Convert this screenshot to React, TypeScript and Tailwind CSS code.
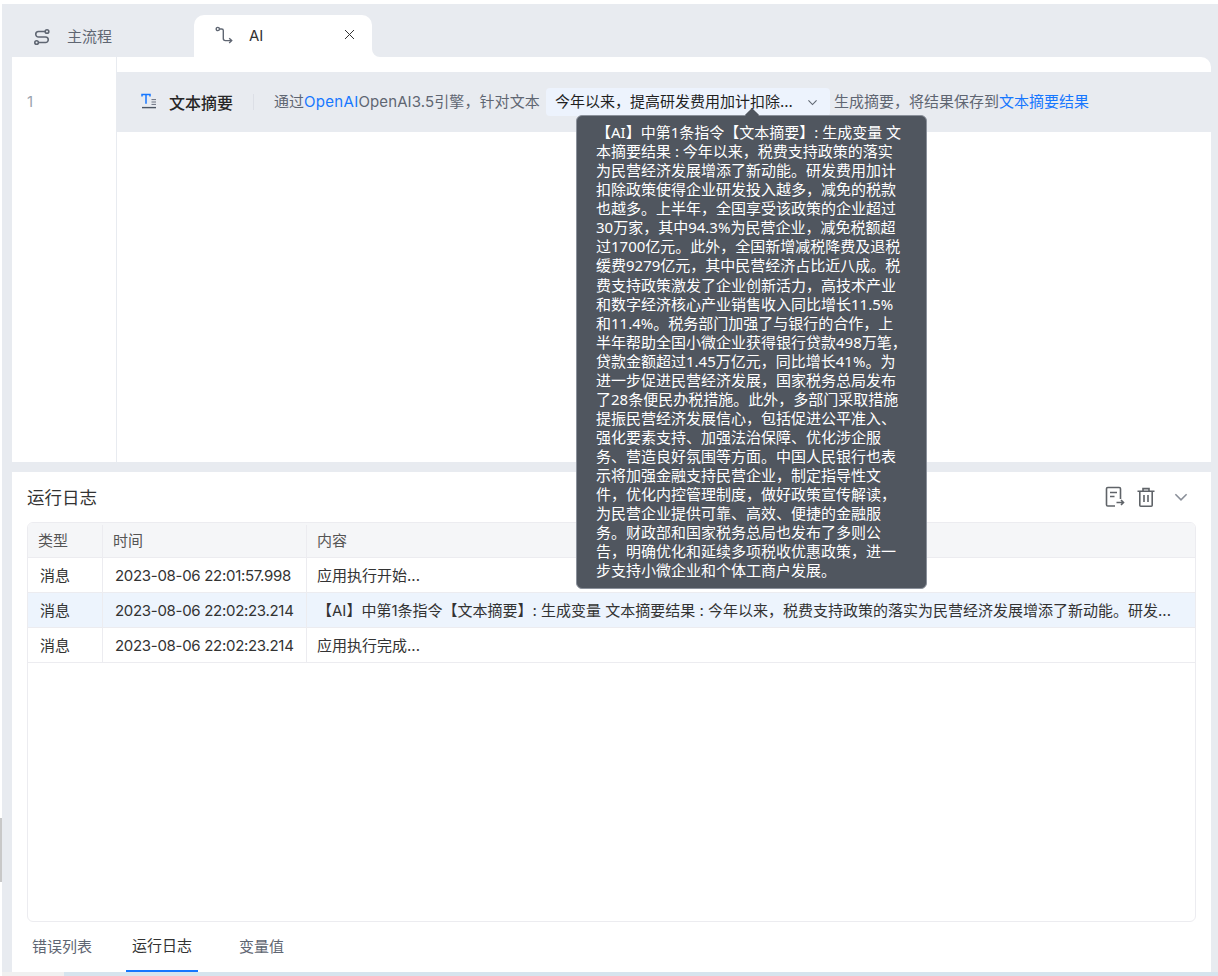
const font = { fontFamily: 'Inter, "Noto Sans CJK SC", sans-serif' }
const tipFont = { fontFamily: '"Noto Sans", "Noto Sans CJK SC", sans-serif' }

const tipText = '【AI】中第1条指令【文本摘要】: 生成变量 文本摘要结果 : 今年以来，税费支持政策的落实为民营经济发展增添了新动能。研发费用加计扣除政策使得企业研发投入越多，减免的税款也越多。上半年，全国享受该政策的企业超过30万家，其中94.3%为民营企业，减免税额超过1700亿元。此外，全国新增减税降费及退税缓费9279亿元，其中民营经济占比近八成。税费支持政策激发了企业创新活力，高技术产业和数字经济核心产业销售收入同比增长11.5%和11.4%。税务部门加强了与银行的合作，上半年帮助全国小微企业获得银行贷款498万笔，贷款金额超过1.45万亿元，同比增长41%。为进一步促进民营经济发展，国家税务总局发布了28条便民办税措施。此外，多部门采取措施提振民营经济发展信心，包括促进公平准入、强化要素支持、加强法治保障、优化涉企服务、营造良好氛围等方面。中国人民银行也表示将加强金融支持民营企业，制定指导性文件，优化内控管理制度，做好政策宣传解读，为民营企业提供可靠、高效、便捷的金融服务。财政部和国家税务总局也发布了多则公告，明确优化和延续多项税收优惠政策，进一步支持小微企业和个体工商户发展。'

const rows = [
  { time: '2023-08-06 22:01:57.998', text: '应用执行开始...', active: false },
  { time: '2023-08-06 22:02:23.214', text: '【AI】中第1条指令【文本摘要】: 生成变量 文本摘要结果 : 今年以来，税费支持政策的落实为民营经济发展增添了新动能。研发...', active: true },
  { time: '2023-08-06 22:02:23.214', text: '应用执行完成...', active: false },
]

const FlowIcon = () => (
  <svg width="18" height="18" viewBox="0 0 18 18" fill="none" stroke="#5f6672" strokeWidth="1.6">
    <circle cx="14" cy="3.5" r="1.8" />
    <circle cx="3.6" cy="14.5" r="1.8" />
    <path d="M12 3.5H5.5a2.75 2.75 0 0 0 0 5.5h7a2.75 2.75 0 0 1 0 5.5H5.6" />
  </svg>
)

const RouteIcon = () => (
  <svg width="18" height="18" viewBox="0 0 18 18" fill="none" stroke="#5f6672" strokeWidth="1.4">
    <circle cx="2.8" cy="3" r="1.6" />
    <path d="M4.5 3h2.2a1.6 1.6 0 0 1 1.6 1.6v8a2 2 0 0 0 2 2h6" />
    <path d="M14.2 12.2l2.5 2.4-2.5 2.4" />
  </svg>
)

const SummaryIcon = () => (
  <svg width="16" height="18" viewBox="0 0 16 18" fill="none">
    <path d="M1 3.6V1.6h8v2M5 1.6v9.2" stroke="#1677ff" strokeWidth="1.5" />
    <path d="M1 14.6h14" stroke="#4b5563" strokeWidth="1.4" />
    <path d="M10.5 6.6H15M10.5 9H15M10.5 11.4H15" stroke="#6b7280" strokeWidth="1" />
  </svg>
)

const ExportIcon = () => (
  <svg width="20" height="22" viewBox="0 0 20 22" fill="none" stroke="#5f6368" strokeWidth="1.6">
    <path d="M10 20H2.8a1.3 1.3 0 0 1-1.3-1.3V2.8a1.3 1.3 0 0 1 1.3-1.3h11.4a1.3 1.3 0 0 1 1.3 1.3V13" />
    <path d="M5 6.5h7M5 10.5h4.5" />
    <path d="M11.5 16.5h7M16 14l2.5 2.5L16 19" />
  </svg>
)

const TrashIcon = () => (
  <svg width="18" height="20" viewBox="0 0 18 20" fill="none" stroke="#5f6368" strokeWidth="1.6">
    <path d="M0.5 4.2h17M6 4V1.6h6V4" />
    <path d="M2.8 4.2v14a1 1 0 0 0 1 1h10.4a1 1 0 0 0 1-1v-14" />
    <path d="M7 8v7M11 8v7" />
  </svg>
)

const Chevron = ({ size, color }: { size: number; color: string }) => (
  <svg width={size} height={size} viewBox="0 0 16 16" fill="none" stroke={color} strokeWidth="1.4">
    <path d="M3 5.5l5 5 5-5" />
  </svg>
)

const App = () => {
  return (
    <div style={font} className="relative h-[976px] w-[1218px] overflow-hidden bg-white pl-[2px] pt-[4px]">
      <div className="flex h-[968px] flex-col bg-[#e8ebf0]">
        {/* tabs */}
        <div className="flex h-[53px] shrink-0 items-end pl-[10px]">
          <div className="flex h-[42px] w-[182px] items-center gap-[16px] pl-[21px] pt-[2px] text-[15px] text-[#5f6672]">
            <FlowIcon />
            <span>主流程</span>
          </div>
          <div className="relative flex h-[42px] w-[178px] items-center rounded-t-[10px] bg-white pl-[21px] pr-[17px] text-[15px] text-[#333]">
            <span className="-mt-[2px]"><RouteIcon /></span>
            <span className="ml-[16px] flex-1">AI</span>
            <span className="-mt-[3px]">
              <svg width="11" height="11" viewBox="0 0 11 11" fill="none" stroke="#333" strokeWidth="1">
                <path d="M1 1l9 9M10 1l-9 9" />
              </svg>
            </span>
            <svg className="absolute bottom-0 right-[-8px]" width="8" height="8" viewBox="0 0 8 8">
              <path d="M0 0v8h8a8 8 0 0 1-8-8z" fill="#fff" />
            </svg>
          </div>
        </div>

        {/* editor */}
        <div className="ml-[10px] mr-[7px] flex h-[405px] shrink-0 rounded-tr-[10px] bg-white">
          <div className="w-[104px] shrink-0 pl-[15px] pt-[34px] text-[15px] leading-[22px] text-[#9ca3af]">1</div>
          <div className="flex-1 border-l border-[#e8ebf0]">
            <div className="mt-[15px] flex h-[60px] items-center bg-[#e8ebf0] pl-[24px] text-[15px] text-[#5f6672]">
              <SummaryIcon />
              <span className="ml-[12px] pt-[2px] text-[16px] font-medium text-[#262626]">文本摘要</span>
              <span className="ml-[20px] mr-[20px] h-[16px] w-px bg-[#dcdfe6]" />
              <span>通过</span>
              <span className="tracking-[0.3px] text-[#1677ff]">OpenAI</span>
              <span className="tracking-[0.1px]">OpenAI3.5引擎，针对文本</span>
              <span className="ml-[6px] mr-[4px] flex h-[28px] w-[284px] items-center justify-between rounded-[4px] bg-[#edf3fd] pl-[9px] pr-[11px] text-[#1f1f1f]">
                <span>今年以来，提高研发费用加计扣除...</span>
                <Chevron size={13} color="#5f6672" />
              </span>
              <span>生成摘要，将结果保存到</span>
              <span className="text-[#1677ff]">文本摘要结果</span>
            </div>
          </div>
        </div>

        {/* log panel */}
        <div className="ml-[10px] mr-[7px] mt-[10px] flex h-[500px] shrink-0 flex-col bg-white px-[15px]">
          <div className="flex h-[50px] shrink-0 items-center justify-between pr-[6px]">
            <span className="pt-[2px] text-[17.5px] text-[#333]">运行日志</span>
            <div className="flex items-center">
              <ExportIcon />
              <span className="ml-[12px]"><TrashIcon /></span>
              <span className="ml-[17px]"><Chevron size={18} color="#8a8f99" /></span>
            </div>
          </div>
          <div className="h-[400px] shrink-0 overflow-hidden rounded-[6px] border border-[#ececf0] text-[15px] text-[#333]">
            <div className="flex h-[35px] border-b border-[#ececf0] bg-[#f5f6f8] pt-[2px] text-[#555]">
              <div className="flex w-[75px] shrink-0 items-center border-r border-[#ececf0] pl-[10px]">类型</div>
              <div className="flex w-[204px] shrink-0 items-center border-r border-[#ececf0] pl-[10px]">时间</div>
              <div className="flex flex-1 items-center pl-[10px]">内容</div>
            </div>
            {rows.map((r, i) => (
              <div key={i} className={`flex h-[35px] border-b border-[#ececf0] ${r.active ? 'bg-[#edf4fd]' : ''}`}>
                <div className="flex w-[75px] shrink-0 items-center border-r border-[#ececf0] pl-[12px] pt-[2px]">消息</div>
                <div className="flex w-[204px] shrink-0 items-center border-r border-[#ececf0] pl-[12px] pt-[2px] tracking-[-0.3px]">{r.time}</div>
                <div className="flex min-w-0 flex-1 items-center pl-[10px] pt-[2px]">
                  <span className="whitespace-nowrap">{r.text}</span>
                </div>
              </div>
            ))}
          </div>
          <div className="flex h-[50px] shrink-0 text-[15px] text-[#5f6672]">
            <div className="flex h-full w-[99px] items-center pl-[5px]">错误列表</div>
            <div className="flex h-full w-[72px] items-center justify-center border-b-2 border-[#1677ff] text-[#333]">运行日志</div>
            <div className="ml-[41px] flex h-full items-center">变量值</div>
          </div>
        </div>
      </div>

      {/* window strip at the bottom */}
      <div className="flex h-[4px] bg-[#d6e4ee]">
        <div className="w-[62px] bg-[#f0f0f0]" />
      </div>

      {/* scrollbar grip */}
      <div className="absolute left-0 top-[818px] h-[64px] w-[2px] bg-[#c8c8c8]" />

      {/* tooltip */}
      <div style={tipFont} className="absolute left-[576px] top-[115px] w-[351px] rounded-[6px] border border-[#8b919b] bg-[#50565f] py-[7px] pl-[19px] pr-[19px] text-[15px] leading-[19.07px] text-white">
        <span className="absolute left-[170px] top-[-6px] h-[10px] w-[10px] rotate-45 bg-[#50565f]" />
        <span className="relative">{tipText}</span>
      </div>
    </div>
  )
}

export default App
